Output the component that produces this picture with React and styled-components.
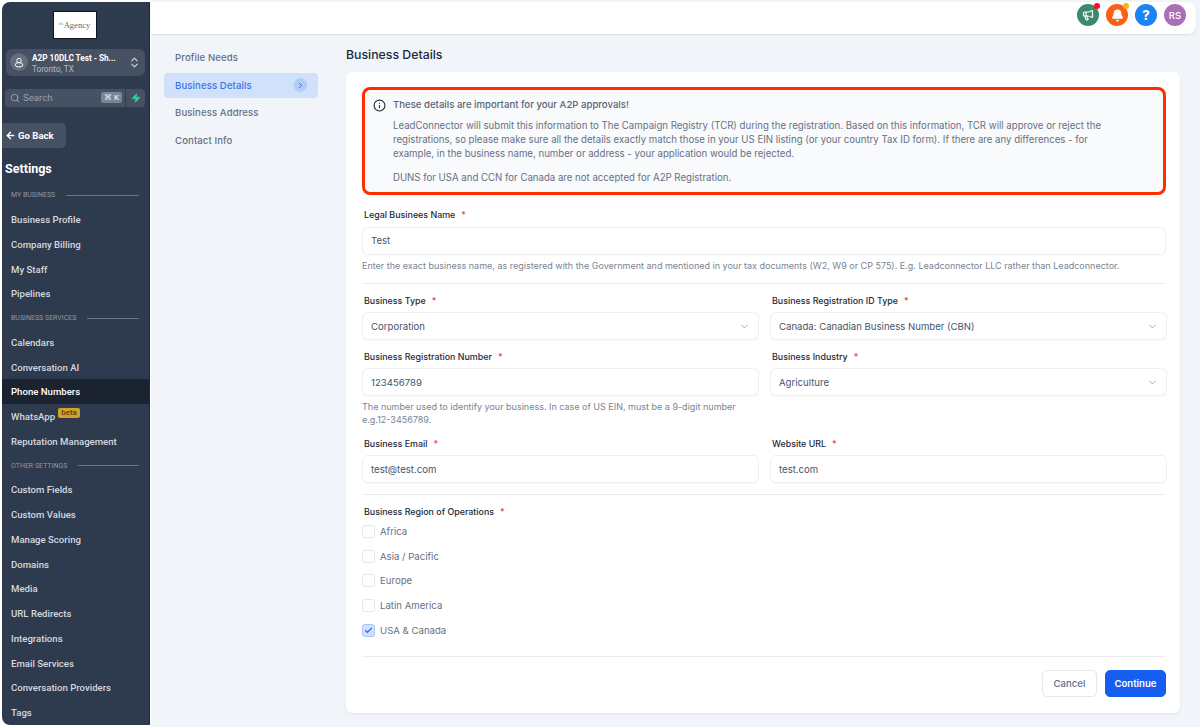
import React from "react";
import styled, { createGlobalStyle } from "styled-components";
import { ChevronDown, ChevronRight, ChevronsUpDown, Search, ArrowLeft, Zap, Bell, Megaphone, Info, Check } from "lucide-react";

const GlobalStyle = createGlobalStyle`
  html, body {
    margin: 0;
    padding: 0;
    background: #ffffff;
  }
  * {
    box-sizing: border-box;
  }
`;

// Whole page, sidebar on the left and content on the right
const Page = styled.div`
  width: 1200px;
  height: 727px;
  display: flex;
  overflow: hidden;
  font-family: Inter, "Liberation Sans", sans-serif;
`;

const Sidebar = styled.aside`
  width: 148px;
  flex-shrink: 0;
  margin: 2px 0 2px 2px;
  background: #2e3a4e;
  border-right: 1px solid #1c2a44;
  border-radius: 8px 0 0 8px;
  font-family: Roboto, "Liberation Sans", sans-serif;
  display: flex;
  flex-direction: column;
  overflow: hidden;
`;

const LogoBox = styled.div`
  align-self: center;
  width: 44px;
  height: 29px;
  margin: 9px 2px 0 0;
  background: #ffffff;
  border: 1px solid #10151f;
  color: #55706f;
  font-family: "Liberation Serif", serif;
  font-size: 8.5px;
  display: flex;
  align-items: center;
  justify-content: center;
`;

const LogoSmall = styled.span`
  font-size: 4px;
  color: #4aa3a0;
  margin-top: -2px;
`;

const AccountCard = styled.div`
  margin: 10px 4px 0 4px;
  height: 28px;
  background: #465164;
  border-radius: 6px;
  display: flex;
  align-items: center;
  padding: 0 4px;
  color: #ffffff;
`;

const AccountAvatar = styled.div`
  width: 18px;
  height: 18px;
  border-radius: 50%;
  background: #636d7e;
  display: flex;
  align-items: center;
  justify-content: center;
  margin-right: 4px;
`;

const AccountText = styled.div`
  flex: 1;
  min-width: 0;
  padding-top: 2px;
`;

const AccountName = styled.div`
  font-size: 8.2px;
  font-weight: 700;
  line-height: 10.5px;
  white-space: nowrap;
`;

const AccountCity = styled.div`
  font-size: 8.2px;
  line-height: 10px;
  color: #b4bac4;
`;

const SearchRow = styled.div`
  margin: 13px 4px 0 3px;
  height: 18px;
  flex-shrink: 0;
  display: flex;
`;

const SearchBox = styled.div`
  flex: 1;
  background: #465164;
  border-radius: 4px 0 0 4px;
  display: flex;
  align-items: center;
  padding: 0 3px 0 5px;
  gap: 3px;
  color: #97a0ad;
  font-size: 9.6px;
`;

const SearchLabel = styled.span`
  flex: 1;
`;

const KeyHint = styled.span`
  background: #7c8593;
  color: #e4e7ec;
  border-radius: 2px;
  font-size: 8px;
  font-weight: 500;
  line-height: 11px;
  padding: 0 3px;
`;

const BoltBox = styled.div`
  width: 19px;
  margin-left: 1px;
  background: #465164;
  border-radius: 0 4px 4px 0;
  display: flex;
  align-items: center;
  justify-content: center;
`;

const GoBack = styled.div`
  margin-top: 16px;
  width: 64px;
  height: 25px;
  flex-shrink: 0;
  background: #465164;
  border-radius: 0 5px 5px 0;
  display: flex;
  align-items: center;
  padding-left: 3px;
  gap: 2px;
  color: #ffffff;
  font-size: 9.6px;
  font-weight: 700;
`;

const SettingsTitle = styled.div`
  margin: 13px 0 6.5px 3px;
  color: #ffffff;
  font-size: 12.5px;
  font-weight: 700;
  line-height: 16px;
`;

const SectionLabel = styled.div`
  height: 23.8px;
  flex-shrink: 0;
  display: flex;
  align-items: center;
  gap: 11px;
  padding: 0 10px 0 9px;
  color: #8f98a6;
  font-size: 7px;
  white-space: nowrap;
  text-transform: uppercase;

  &::after {
    content: "";
    flex: 1;
    height: 1px;
    background: #6b7585;
  }
`;

const NavItem = styled.div`
  height: 24.75px;
  flex-shrink: 0;
  display: flex;
  align-items: center;
  padding-left: 9px;
  font-size: 9.6px;
  font-weight: 500;
  color: ${(p) => (p.$active ? "#ffffff" : "#d5d9df")};
  background: ${(p) => (p.$active ? "#1b2331" : "transparent")};
`;

const BetaBadge = styled.span`
  background: #d4a02c;
  color: #5b4210;
  font-size: 8px;
  line-height: 10px;
  padding: 0 3px;
  border-radius: 2px;
  margin: -7px 0 0 3px;
`;

const Main = styled.div`
  flex: 1;
  min-width: 0;
  margin-left: 1px;
  display: flex;
  flex-direction: column;
  background: #f1f5f9;
`;

const TopBar = styled.header`
  height: 32px;
  margin: 2px 4px 0 0;
  flex-shrink: 0;
  background: #ffffff;
  border-radius: 0 8px 8px 0;
  box-shadow: 0 1px 2px rgba(0, 0, 0, 0.1);
  display: flex;
  justify-content: flex-end;
  align-items: center;
  gap: 7px;
  padding-right: 10px;
  padding-bottom: 6px;
`;

const RoundIcon = styled.div`
  position: relative;
  width: 22px;
  height: 22px;
  border-radius: 50%;
  background: ${(p) => p.$bg};
  color: #ffffff;
  font-size: ${(p) => p.$size || "10px"};
  font-weight: ${(p) => p.$weight || 500};
  display: flex;
  align-items: center;
  justify-content: center;
`;

const Dot = styled.span`
  position: absolute;
  top: -1px;
  right: -1px;
  width: 6px;
  height: 6px;
  border-radius: 50%;
  background: ${(p) => p.$color};
`;

const Body = styled.div`
  flex: 1;
  display: flex;
  min-height: 0;
`;

const SubNav = styled.nav`
  width: 195px;
  flex-shrink: 0;
  padding: 11px 28px 0 13px;
`;

const SubNavItem = styled.div`
  height: 25px;
  margin-bottom: 2.5px;
  border-radius: 4px;
  display: flex;
  align-items: center;
  justify-content: space-between;
  padding: 0 11px 0 11px;
  font-size: 9.6px;
  font-weight: 500;
  letter-spacing: 0.1px;
  color: ${(p) => (p.$active ? "#3b73e8" : "#667085")};
  background: ${(p) => (p.$active ? "#d1e0fb" : "transparent")};
`;

const ChevronBubble = styled.span`
  width: 13.5px;
  height: 13.5px;
  border-radius: 50%;
  background: #b2ccf6;
  color: #2f66e0;
  display: flex;
  align-items: center;
  justify-content: center;
`;

const Content = styled.main`
  flex: 1;
  min-width: 0;
  padding-right: 20px;
`;

const PageTitle = styled.h1`
  margin: 0;
  height: 38px;
  padding-top: 13px;
  font-size: 12.3px;
  line-height: 16px;
  font-weight: 500;
  color: #1d2939;
`;

const Card = styled.section`
  background: #ffffff;
  border-radius: 6px;
  box-shadow: 0 1px 2px rgba(16, 24, 40, 0.08);
  height: 641px;
  padding: 15px 14px 0 16px;
`;

const Alert = styled.div`
  height: 108px;
  background: #f9fafb;
  border: 3.5px solid #ff2d00;
  border-radius: 8px;
  padding: 8px 50px 0 8px;
  margin-bottom: 14px;
  font-size: 9.64px;
  color: #667085;
  line-height: 14px;
`;

const AlertHead = styled.div`
  display: flex;
  align-items: center;
  gap: 7px;
  color: #5a6475;
  font-weight: 500;
  height: 14px;
  margin-bottom: 7px;
  font-size: 9.6px;
`;

const AlertText = styled.p`
  margin: 0 0 10px 20px;
`;

const Label = styled.label`
  display: block;
  font-size: 8.9px;
  line-height: 12px;
  font-weight: 500;
  color: #1d2939;
  padding-left: 2px;
  margin-bottom: 5.5px;
`;

const Required = styled.span`
  color: #f04438;
  margin-left: 6px;
`;

const Input = styled.div`
  height: 28px;
  background: #ffffff;
  border: 1px solid #edeff3;
  border-radius: 6px;
  display: flex;
  align-items: center;
  justify-content: space-between;
  padding: 0 8px;
  font-size: 9.6px;
  color: #475467;
  box-shadow: 0 1px 1px rgba(16, 24, 40, 0.03);
`;

const Hint = styled.div`
  margin-top: 4px;
  font-size: 9px;
  line-height: 13px;
  color: #7a8494;
  max-width: ${(p) => p.$max || "none"};
`;

const Divider = styled.hr`
  border: none;
  height: 1px;
  background: #eaecf0;
  margin: ${(p) => p.$margin};
`;

const Grid = styled.div`
  display: grid;
  grid-template-columns: 397px 397px;
  column-gap: 11px;
`;

const Field = styled.div`
  height: ${(p) => p.$height};
`;

const CheckList = styled.div`
  margin-top: -4.5px;
`;

const CheckRow = styled.div`
  height: 24.75px;
  display: flex;
  align-items: center;
  gap: 5px;
  font-size: 9.6px;
  color: #667085;
`;

const Box = styled.span`
  width: 13px;
  height: 13px;
  border-radius: 3px;
  border: 1px solid ${(p) => (p.$checked ? "#a9c4f5" : "#e4e7ec")};
  background: ${(p) => (p.$checked ? "#d1e0fb" : "#ffffff")};
  color: #2563eb;
  display: flex;
  align-items: center;
  justify-content: center;
`;

const Footer = styled.div`
  display: flex;
  justify-content: flex-end;
  gap: 8px;
`;

const Button = styled.button`
  height: 27px;
  width: ${(p) => (p.$primary ? "61px" : "55px")};
  border-radius: 5px;
  border: 1px solid ${(p) => (p.$primary ? "#155eef" : "#e4e7ec")};
  background: ${(p) => (p.$primary ? "#155eef" : "#ffffff")};
  color: ${(p) => (p.$primary ? "#ffffff" : "#667085")};
  font-family: inherit;
  font-size: 9.6px;
  font-weight: ${(p) => (p.$primary ? 600 : 500)};
  padding: 0;
`;

const sections = [
  {
    label: "My Business",
    items: ["Business Profile", "Company Billing", "My Staff", "Pipelines"],
  },
  {
    label: "Business Services",
    items: ["Calendars", "Conversation AI", "Phone Numbers", "WhatsApp", "Reputation Management"],
  },
  {
    label: "Other Settings",
    items: [
      "Custom Fields",
      "Custom Values",
      "Manage Scoring",
      "Domains",
      "Media",
      "URL Redirects",
      "Integrations",
      "Email Services",
      "Conversation Providers",
      "Tags",
    ],
  },
];

const regions = ["Africa", "Asia / Pacific", "Europe", "Latin America", "USA & Canada"];

const FieldLabel = ({ children }) => (
  <Label>
    {children}
    <Required>*</Required>
  </Label>
);

const App = () => {
  return (
    <Page>
      <GlobalStyle />
      <Sidebar>
        <LogoBox>
          <LogoSmall>the</LogoSmall>
          <span>Agency</span>
        </LogoBox>
        <AccountCard>
          <AccountAvatar>
            <svg width="10" height="11" viewBox="0 0 10 11" fill="none" stroke="#ffffff" strokeWidth="1">
              <circle cx="5" cy="3.5" r="2.2" />
              <ellipse cx="5" cy="7.8" rx="3.8" ry="2.2" />
            </svg>
          </AccountAvatar>
          <AccountText>
            <AccountName>A2P 10DLC Test - Sh...</AccountName>
            <AccountCity>Toronto, TX</AccountCity>
          </AccountText>
          <ChevronsUpDown size={13} color="#d5d9df" />
        </AccountCard>
        <SearchRow>
          <SearchBox>
            <Search size={10} strokeWidth={2.4} />
            <SearchLabel>Search</SearchLabel>
            <KeyHint>⌘ K</KeyHint>
          </SearchBox>
          <BoltBox>
            <Zap size={10} color="#2ed3a0" fill="#2ed3a0" />
          </BoltBox>
        </SearchRow>
        <GoBack>
          <ArrowLeft size={11} strokeWidth={3} />
          Go Back
        </GoBack>
        <SettingsTitle>Settings</SettingsTitle>
        {sections.map((section) => (
          <React.Fragment key={section.label}>
            <SectionLabel>{section.label}</SectionLabel>
            {section.items.map((item) => (
              <NavItem key={item} $active={item === "Phone Numbers"}>
                {item}
                {item === "WhatsApp" && <BetaBadge>beta</BetaBadge>}
              </NavItem>
            ))}
          </React.Fragment>
        ))}
      </Sidebar>

      <Main>
        <TopBar>
          <RoundIcon $bg="#3b8a6e">
            <Megaphone size={12} strokeWidth={2.4} />
            <Dot $color="#ff0a1e" />
          </RoundIcon>
          <RoundIcon $bg="#f9601a">
            <Bell size={13} fill="#ffffff" />
            <Dot $color="#fdb022" />
          </RoundIcon>
          <RoundIcon $bg="#1b84f5" $size="13px" $weight={800}>
            ?
          </RoundIcon>
          <RoundIcon $bg="#ab6fb8" $size="9.5px">
            RS
          </RoundIcon>
        </TopBar>
        <Body>
          <SubNav>
            <SubNavItem>Profile Needs</SubNavItem>
            <SubNavItem $active>
              Business Details
              <ChevronBubble>
                <ChevronRight size={9} strokeWidth={2.5} />
              </ChevronBubble>
            </SubNavItem>
            <SubNavItem>Business Address</SubNavItem>
            <SubNavItem>Contact Info</SubNavItem>
          </SubNav>
          <Content>
            <PageTitle>Business Details</PageTitle>
            <Card>
              <Alert>
                <AlertHead>
                  <Info size={13} color="#1d2939" />
                  These details are important for your A2P approvals!
                </AlertHead>
                <AlertText>
                  LeadConnector will submit this information to The Campaign Registry (TCR) during the registration.
                  Based on this information, TCR will approve or reject the registrations, so please make sure all the
                  details exactly match those in your US EIN listing (or your country Tax ID form). If there are any
                  differences - for example, in the business name, number or address - your application would be
                  rejected.
                </AlertText>
                <AlertText>DUNS for USA and CCN for Canada are not accepted for A2P Registration.</AlertText>
              </Alert>

              <FieldLabel>Legal Businees Name</FieldLabel>
              <Input>Test</Input>
              <Hint>
                Enter the exact business name, as registered with the Government and mentioned in your tax documents
                (W2, W9 or CP 575). E.g. Leadconnector LLC rather than Leadconnector.
              </Hint>
              <Divider $margin="11px 0 11px" />

              <Grid>
                <Field $height="56px">
                  <FieldLabel>Business Type</FieldLabel>
                  <Input>
                    Corporation
                    <ChevronDown size={11} color="#98a2b3" />
                  </Input>
                </Field>
                <Field $height="56px">
                  <FieldLabel>Business Registration ID Type</FieldLabel>
                  <Input>
                    Canada: Canadian Business Number (CBN)
                    <ChevronDown size={11} color="#98a2b3" />
                  </Input>
                </Field>
                <Field $height="87px">
                  <FieldLabel>Business Registration Number</FieldLabel>
                  <Input>123456789</Input>
                  <Hint $max="385px">
                    The number used to identify your business. In case of US EIN, must be a 9-digit number
                    e.g.12-3456789.
                  </Hint>
                </Field>
                <Field $height="87px">
                  <FieldLabel>Business Industry</FieldLabel>
                  <Input>
                    Agriculture
                    <ChevronDown size={11} color="#98a2b3" />
                  </Input>
                </Field>
                <Field>
                  <FieldLabel>Business Email</FieldLabel>
                  <Input>test@test.com</Input>
                </Field>
                <Field>
                  <FieldLabel>Website URL</FieldLabel>
                  <Input>test.com</Input>
                </Field>
              </Grid>
              <Divider $margin="11px 0 11px" />

              <FieldLabel>Business Region of Operations</FieldLabel>
              <CheckList>
                {regions.map((region) => {
                  const checked = region === "USA & Canada";
                  return (
                    <CheckRow key={region}>
                      <Box $checked={checked}>{checked && <Check size={9} strokeWidth={3} />}</Box>
                      {region}
                    </CheckRow>
                  );
                })}
              </CheckList>
              <Divider $margin="13px 0 13px" />

              <Footer>
                <Button>Cancel</Button>
                <Button $primary>Continue</Button>
              </Footer>
            </Card>
          </Content>
        </Body>
      </Main>
    </Page>
  );
};

export default App;
